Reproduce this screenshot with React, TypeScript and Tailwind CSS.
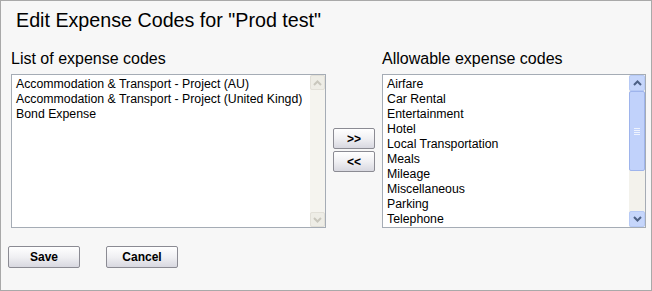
import React from "react";

const leftCodes = [
  "Accommodation & Transport - Project (AU)",
  "Accommodation & Transport - Project (United Kingd)",
  "Bond Expense",
];

const rightCodes = [
  "Airfare",
  "Car Rental",
  "Entertainment",
  "Hotel",
  "Local Transportation",
  "Meals",
  "Mileage",
  "Miscellaneous",
  "Parking",
  "Telephone",
];

const Chevron = ({ up, color }: { up?: boolean; color: string }) => (
  <svg width="9" height="6" viewBox="0 0 9 6">
    <path
      d={up ? "M1 5 L4.5 1.5 L8 5" : "M1 1 L4.5 4.5 L8 1"}
      fill="none"
      stroke={color}
      strokeWidth="2"
    />
  </svg>
);

const ScrollBar = ({ enabled }: { enabled: boolean }) => {
  if (!enabled) {
    return (
      <div className="flex w-[15px] flex-col bg-[#f5f4ef]">
        <div className="flex h-[15px] items-center justify-center rounded-[2px] border border-[#e2e0d8] bg-[#eeede6]">
          <Chevron up color="#c9c7bd" />
        </div>
        <div className="flex-1" />
        <div className="flex h-[15px] items-center justify-center rounded-[2px] border border-[#e2e0d8] bg-[#eeede6]">
          <Chevron color="#c9c7bd" />
        </div>
      </div>
    );
  }
  return (
    <div className="flex w-[16px] flex-col bg-[#f3f2ec]">
      <div className="flex h-[16px] items-center justify-center rounded-[2px] border border-[#b7caf5] bg-[#c6d6fb]">
        <Chevron up color="#4d6185" />
      </div>
      <div className="flex h-[80px] flex-col items-center justify-center gap-[1px] rounded-[2px] border border-[#9eb4ec] bg-[#c1d2fb]">
        <div className="h-px w-[6px] bg-[#eef3fe]" />
        <div className="h-px w-[6px] bg-[#eef3fe]" />
        <div className="h-px w-[6px] bg-[#eef3fe]" />
        <div className="h-px w-[6px] bg-[#eef3fe]" />
      </div>
      <div className="flex-1" />
      <div className="flex h-[16px] items-center justify-center rounded-[2px] border border-[#b7caf5] bg-[#c6d6fb]">
        <Chevron color="#4d6185" />
      </div>
    </div>
  );
};

const ListBox = ({
  items,
  width,
  scroll,
}: {
  items: string[];
  width: string;
  scroll: boolean;
}) => (
  <div className={`flex h-[154px] ${width} border border-[#a5acb5] bg-white`}>
    <div className="flex-1 overflow-hidden pl-[4px] pt-[2px] text-[12.3px] leading-[15px] text-black">
      {items.map((item) => (
        <div key={item} className="whitespace-nowrap">
          {item}
        </div>
      ))}
    </div>
    <ScrollBar enabled={scroll} />
  </div>
);

const FormButton = ({ label, className }: { label: string; className: string }) => (
  <button
    className={`rounded-[2px] border border-[#8b8b93] bg-gradient-to-b from-white via-[#f0f0f3] to-[#d8d8e0] text-[12px] font-bold leading-none text-black ${className}`}
  >
    {label}
  </button>
);

export default function App() {
  return (
    <div
      className="h-[291px] w-[652px] border border-[#a9a9a9] bg-[#f7f7f7]"
      style={{ fontFamily: '"Liberation Sans", Arial, sans-serif' }}
    >
      <h1 className="pl-[15px] pt-[8px] text-[19.7px] leading-[22px] text-black">
        Edit Expense Codes for "Prod test"
      </h1>

      <div className="mt-[18px] flex pl-[10px]">
        <div className="flex flex-col">
          <div className="text-[16px] leading-[19px] text-black">
            List of expense codes
          </div>
          <div className="mt-[6px]">
            <ListBox items={leftCodes} width="w-[315px]" scroll={false} />
          </div>
        </div>

        <div className="ml-[7px] flex flex-col gap-[2px] pt-[79px]">
          <FormButton label=">>" className="h-[21px] w-[42px]" />
          <FormButton label="<<" className="h-[21px] w-[42px]" />
        </div>

        <div className="ml-[7px] flex flex-col">
          <div className="text-[16px] leading-[19px] text-black">
            Allowable expense codes
          </div>
          <div className="mt-[6px]">
            <ListBox items={rightCodes} width="w-[264px]" scroll />
          </div>
        </div>
      </div>

      <div className="mt-[18px] flex gap-[26px] pl-[7px]">
        <FormButton label="Save" className="h-[22px] w-[72px]" />
        <FormButton label="Cancel" className="h-[22px] w-[72px]" />
      </div>
    </div>
  );
}
